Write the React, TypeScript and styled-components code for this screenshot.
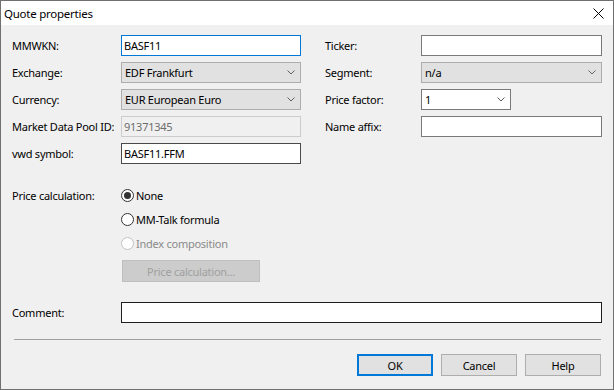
import React from "react";
import styled, { createGlobalStyle, css } from "styled-components";

const Global = createGlobalStyle`
  html, body { margin: 0; padding: 0; background: #f0f0f0; }
  body { font-family: "Noto Sans", "Open Sans", sans-serif; font-size: 11px; letter-spacing: -0.25px; color: #000; }
  * { box-sizing: border-box; }
`;

const Window = styled.div`
  width: 614px;
  height: 390px;
  border: 1px solid #707070;
  background: #f0f0f0;
  display: flex;
  flex-direction: column;
`;

const TitleBar = styled.div`
  height: 24px;
  background: #ffffff;
  display: flex;
  align-items: center;
  justify-content: space-between;
  padding: 0 9px 0 3px;
`;

const Title = styled.span`
  font-size: 11.5px;
  color: #000;
`;

const Body = styled.div`
  flex: 1;
  display: flex;
  flex-direction: column;
  padding: 10px 11px 0 10px;
`;

const TopGrid = styled.div`
  display: flex;
  gap: 23px;
`;

const Column = styled.div`
  display: flex;
  flex-direction: column;
  gap: 6px;
`;

const Row = styled.div<{ $labelWidth: number }>`
  display: grid;
  grid-template-columns: ${(p) => p.$labelWidth}px auto;
  align-items: center;
  height: 21px;
`;

const Label = styled.span`
  white-space: nowrap;
  padding-left: 1px;
`;

const TextBox = styled.div<{ $width: number; $variant?: "focus" | "normal" | "dark" | "disabled" | "black" }>`
  width: ${(p) => p.$width}px;
  height: 21px;
  background: #fff;
  display: flex;
  align-items: center;
  padding-left: 2px;
  border: 1px solid #7a7a7a;
  ${(p) =>
    p.$variant === "focus" &&
    css`
      border-color: #0078d7;
    `}
  ${(p) =>
    p.$variant === "dark" &&
    css`
      border-color: #4a4a4a;
    `}
  ${(p) =>
    p.$variant === "black" &&
    css`
      border-color: #1e1e1e;
    `}
  ${(p) =>
    p.$variant === "disabled" &&
    css`
      border-color: #cccccc;
      background: #f0f0f0;
      color: #6d6d6d;
    `}
`;

const Combo = styled.div<{ $width: number; $editable?: boolean }>`
  width: ${(p) => p.$width}px;
  height: 21px;
  display: flex;
  align-items: center;
  justify-content: space-between;
  padding: 0 5px 0 3px;
  background: ${(p) => (p.$editable ? "#fff" : "#e1e1e1")};
  border: 1px solid ${(p) => (p.$editable ? "#7a7a7a" : "#adadad")};
`;

const Chevron = () => (
  <svg width="8" height="5" viewBox="0 0 8 5">
    <path d="M0.5 0.5 L4 4 L7.5 0.5" fill="none" stroke="#606060" strokeWidth="1" />
  </svg>
);

const PriceSection = styled.div`
  display: grid;
  grid-template-columns: 110px auto;
  margin-top: 19px;
`;

const PriceLabel = styled.span`
  height: 24px;
  display: flex;
  align-items: center;
  padding-left: 1px;
`;

const RadioList = styled.div`
  display: flex;
  flex-direction: column;
`;

const RadioRow = styled.label<{ $disabled?: boolean }>`
  height: 24px;
  display: flex;
  align-items: center;
  gap: 2px;
  color: ${(p) => (p.$disabled ? "#8a8a8a" : "#000")};
`;

const RadioCircle = styled.span<{ $checked?: boolean; $disabled?: boolean }>`
  width: 13px;
  height: 13px;
  border-radius: 50%;
  border: 1px solid ${(p) => (p.$disabled ? "#c2c2c2" : "#333")};
  background: #fff;
  display: flex;
  align-items: center;
  justify-content: center;
  &::after {
    content: "";
    width: 7px;
    height: 7px;
    border-radius: 50%;
    background: ${(p) => (p.$checked ? "#333" : "transparent")};
  }
`;

const CalcButton = styled.div`
  margin-top: 5px;
  margin-left: 1px;
  width: 138px;
  height: 22px;
  background: #cccccc;
  border: 1px solid #bfbfbf;
  color: #a0a0a0;
  display: flex;
  align-items: center;
  justify-content: center;
`;

const CommentRow = styled.div`
  display: grid;
  grid-template-columns: 110px 481px;
  align-items: center;
  height: 21px;
  margin-top: 20px;
`;

const Separator = styled.div`
  height: 1px;
  background: #a0a0a0;
  margin: 16px 1px 0 3px;
`;

const ButtonBar = styled.div`
  display: flex;
  justify-content: flex-end;
  gap: 8px;
  margin-top: 14px;
  padding-right: 1px;
`;

const DialogButton = styled.div<{ $default?: boolean }>`
  width: 76px;
  height: 22px;
  background: #e1e1e1;
  border: ${(p) => (p.$default ? "2px solid #0078d7" : "1px solid #adadad")};
  display: flex;
  align-items: center;
  justify-content: center;
`;

const CloseIcon = () => (
  <svg width="11" height="11" viewBox="0 0 11 11">
    <path d="M0.5 0.5 L10.5 10.5 M10.5 0.5 L0.5 10.5" stroke="#000" strokeWidth="1" />
  </svg>
);

export default function App() {
  return (
    <>
      <Global />
      <Window>
        <TitleBar>
          <Title>Quote properties</Title>
          <CloseIcon />
        </TitleBar>
        <Body>
          <TopGrid>
            <Column>
              <Row $labelWidth={110}>
                <Label>MMWKN:</Label>
                <TextBox $width={180} $variant="focus">BASF11</TextBox>
              </Row>
              <Row $labelWidth={110}>
                <Label>Exchange:</Label>
                <Combo $width={180}>
                  <span>EDF Frankfurt</span>
                  <Chevron />
                </Combo>
              </Row>
              <Row $labelWidth={110}>
                <Label>Currency:</Label>
                <Combo $width={180}>
                  <span>EUR European Euro</span>
                  <Chevron />
                </Combo>
              </Row>
              <Row $labelWidth={110}>
                <Label>Market Data Pool ID:</Label>
                <TextBox $width={180} $variant="disabled">91371345</TextBox>
              </Row>
              <Row $labelWidth={110}>
                <Label>vwd symbol:</Label>
                <TextBox $width={180} $variant="dark">BASF11.FFM</TextBox>
              </Row>
            </Column>
            <Column>
              <Row $labelWidth={97}>
                <Label>Ticker:</Label>
                <TextBox $width={181} />
              </Row>
              <Row $labelWidth={97}>
                <Label>Segment:</Label>
                <Combo $width={181}>
                  <span>n/a</span>
                  <Chevron />
                </Combo>
              </Row>
              <Row $labelWidth={97}>
                <Label>Price factor:</Label>
                <Combo $width={90} $editable>
                  <span>1</span>
                  <Chevron />
                </Combo>
              </Row>
              <Row $labelWidth={97}>
                <Label>Name affix:</Label>
                <TextBox $width={181} />
              </Row>
            </Column>
          </TopGrid>
          <PriceSection>
            <PriceLabel>Price calculation:</PriceLabel>
            <RadioList>
              <RadioRow>
                <RadioCircle $checked />
                None
              </RadioRow>
              <RadioRow>
                <RadioCircle />
                MM-Talk formula
              </RadioRow>
              <RadioRow $disabled>
                <RadioCircle $disabled />
                Index composition
              </RadioRow>
              <CalcButton>Price calculation...</CalcButton>
            </RadioList>
          </PriceSection>
          <CommentRow>
            <Label>Comment:</Label>
            <TextBox $width={481} $variant="black" />
          </CommentRow>
          <Separator />
          <ButtonBar>
            <DialogButton $default>OK</DialogButton>
            <DialogButton>Cancel</DialogButton>
            <DialogButton>Help</DialogButton>
          </ButtonBar>
        </Body>
      </Window>
    </>
  );
}
